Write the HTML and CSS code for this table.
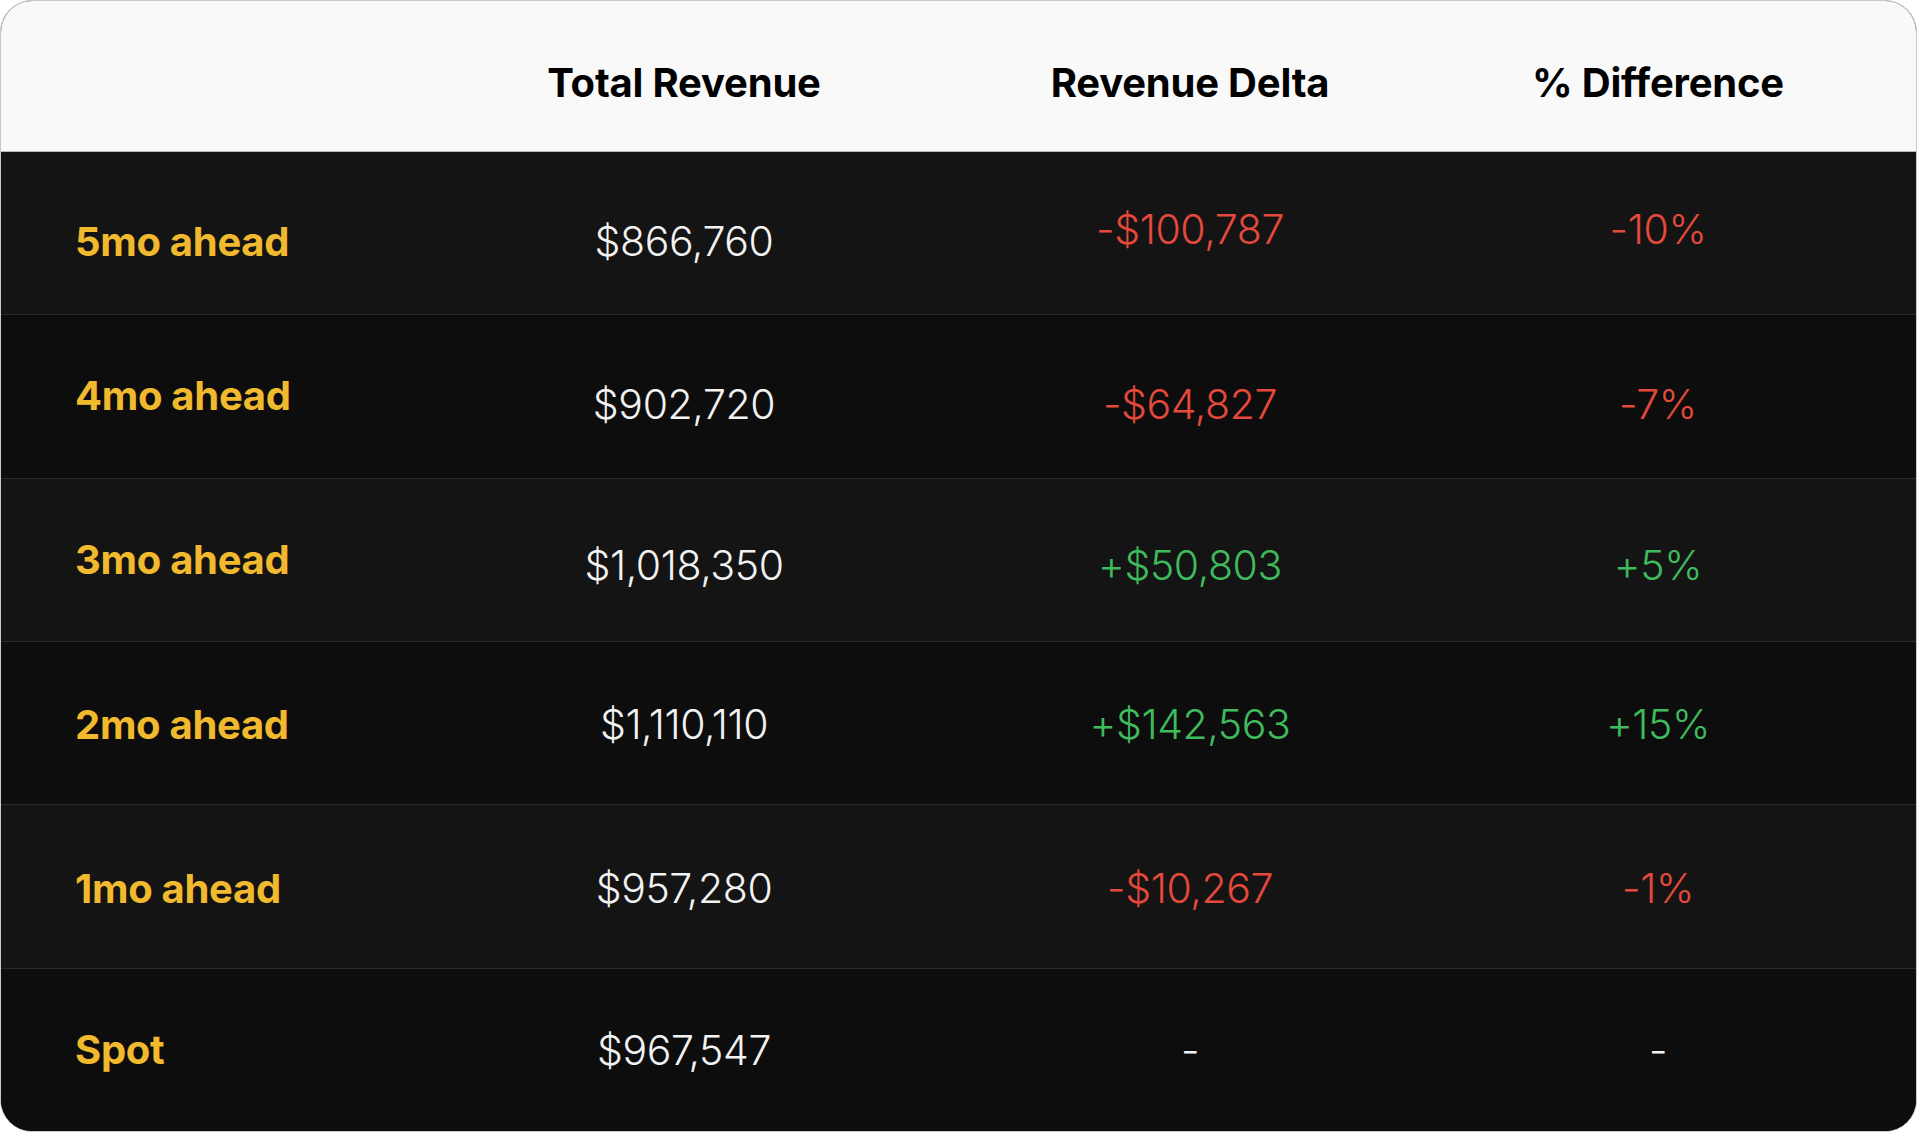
FILE: index.html
```html
<!DOCTYPE html>
<html lang="en">
<head>
<meta charset="utf-8">
<title>Revenue Table</title>
<link rel="stylesheet" href="styles.css">
</head>
<body>
<div class="card">
  <div class="row head">
    <div class="cell label"></div>
    <div class="cell">Total Revenue</div>
    <div class="cell">Revenue Delta</div>
    <div class="cell">% Difference</div>
  </div>
  <div class="body">
    <div class="row odd">
      <div class="cell label dn8">5mo ahead</div>
      <div class="cell val dn8">$866,760</div>
      <div class="cell val neg up4">-$100,787</div>
      <div class="cell val neg up4">-10%</div>
    </div>
    <div class="row even">
      <div class="cell label up1">4mo ahead</div>
      <div class="cell val dn8">$902,720</div>
      <div class="cell val neg dn8">-$64,827</div>
      <div class="cell val neg dn8">-7%</div>
    </div>
    <div class="row odd">
      <div class="cell label">3mo ahead</div>
      <div class="cell val dn5">$1,018,350</div>
      <div class="cell val pos dn5">+$50,803</div>
      <div class="cell val pos dn5">+5%</div>
    </div>
    <div class="row even">
      <div class="cell label dn1">2mo ahead</div>
      <div class="cell val dn1">$1,110,110</div>
      <div class="cell val pos dn1">+$142,563</div>
      <div class="cell val pos dn1">+15%</div>
    </div>
    <div class="row odd">
      <div class="cell label dn2">1mo ahead</div>
      <div class="cell val dn2">$957,280</div>
      <div class="cell val neg dn2">-$10,267</div>
      <div class="cell val neg dn2">-1%</div>
    </div>
    <div class="row even">
      <div class="cell label">Spot</div>
      <div class="cell val">$967,547</div>
      <div class="cell val">-</div>
      <div class="cell val">-</div>
    </div>
  </div>
</div>
</body>
</html>
```
FILE: styles.css
```css
* { box-sizing: border-box; }
html, body { margin: 0; padding: 0; background: #ffffff; }
body { font-family: "Inter", "Liberation Sans", sans-serif; }

.card {
  width: 1917px;
  height: 1132px;
  border: 1px solid #c9c9c9;
  border-radius: 32px;
  overflow: hidden;
  display: flex;
  flex-direction: column;
  background: #0d0d0d;
}

.row {
  display: grid;
  grid-template-columns: 439px 488px 524px 1fr;
  padding-right: 52px;
}

.head {
  height: 151px;
  flex: none;
  background: #f9f9f9;
  border-bottom: 1px solid #b9b9b9;
  color: #000;
  font-weight: 700;
  font-size: 40px;
  letter-spacing: -0.2px;
}
.head .cell { padding-top: 12px; }

.body {
  flex: 1;
  display: flex;
  flex-direction: column;
}
.body .row {
  flex: 1;
  border-top: 1px solid #2b2b2b;
}
.body .row:first-child { border-top: none; }
.odd { background: #141414; }
.even { background: #0d0d0d; }

.cell {
  display: flex;
  align-items: center;
  justify-content: center;
  white-space: nowrap;
}
.cell.label {
  justify-content: flex-start;
  padding-left: 74px;
  color: #f0b92e;
  font-weight: 700;
  font-size: 40px;
  letter-spacing: -0.3px;
}
.val {
  color: #f2f2f2;
  font-weight: 300;
  font-size: 41px;
  letter-spacing: -0.4px;
}
.neg { color: #e4493b; }
.pos { color: #3fbb5e; }

.dn1 { padding-top: 2px; }
.dn2 { padding-top: 4px; }
.dn5 { padding-top: 10px; }
.dn8 { padding-top: 16px; }
.up1 { padding-bottom: 2px; }
.up4 { padding-bottom: 8px; }
```
